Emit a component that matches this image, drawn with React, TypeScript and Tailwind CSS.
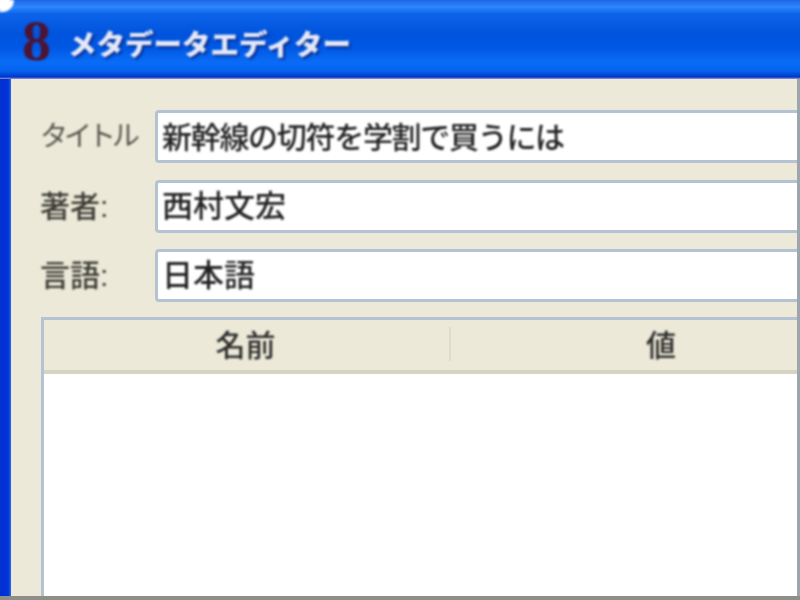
const font = "font-['Liberation_Sans','Noto_Sans_CJK_JP',sans-serif]";

function Field({ label, value, className, labelClass, valueClass }: { label: string; value: string; className: string; labelClass: string; valueClass: string }) {
  return (
    <div className={`flex items-center ${className}`}>
      <span className={`w-[115px] shrink-0 leading-none text-[#3c3c36] blur-[1px] whitespace-nowrap ${labelClass}`}>{label}</span>
      <div className="flex-1 h-[53px] flex items-center pl-[4px] bg-white border-y-[3px] border-l-[3px] border-[#b4c3d3] rounded-l-[4px] blur-[0.5px]">
        <span className={`leading-none text-[#222] font-medium blur-[0.8px] whitespace-nowrap ${valueClass}`}>{value}</span>
      </div>
    </div>
  );
}

export default function App() {
  return (
    <div className={`relative w-[800px] h-[600px] overflow-hidden flex flex-col bg-white ${font}`}>
      {/* window corner */}
      <div className="absolute top-0 left-0 w-[14px] h-[12px] bg-white rounded-br-[14px] blur-[1px]" />

      <div className="h-[79px] shrink-0 flex items-center pl-[22px] pt-[12px] rounded-tl-[14px] bg-[linear-gradient(to_bottom,#1c66e6_0px,#2f86fb_7px,#0c63ea_14px,#0053dc_34px,#0058e4_48px,#0a6cf6_62px,#0463ee_71px,#0036c8_77px,#9a9ad0_79px)]">
        <span className="w-[46px] -mt-[10px] text-[58px] leading-none font-bold text-[#4c1434] font-['Liberation_Serif',serif] blur-[1px]">8</span>
        <span className="text-[28.5px] leading-none font-black text-[#e4e9f8] blur-[0.9px] [text-shadow:2px_2px_2px_#0a2f90] whitespace-nowrap">メタデータエディター</span>
      </div>

      <div className="flex-1 min-h-0 flex">
        <div className="w-[11px] shrink-0 bg-[linear-gradient(to_right,#0030d0,#0034d8_75%,#2a6ae8)]" />
        <div className="flex-1 min-w-0 flex flex-col pt-[31px] pl-[29px] bg-[#ece9d8] border-r-[3px] border-[#9da6ad]">
          <Field label="タイトル" value="新幹線の切符を学割で買うには" className="" labelClass="text-[28px] tracking-[-4px] text-[#55554d]" valueClass="text-[30px] tracking-[-1.3px] pt-[2px]" />
          <Field label="著者:" value="西村文宏" className="mt-[17px]" labelClass="text-[30px] font-medium" valueClass="text-[31px]" />
          <Field label="言語:" value="日本語" className="mt-[16px]" labelClass="text-[30px] font-medium" valueClass="text-[31px]" />

          <div className="flex-1 min-h-0 mt-[15px] ml-[1px] flex flex-col border-t-[3px] border-l-[3px] border-[#b4c3d3]">
            <div className="h-[54px] shrink-0 flex border-b-[4px] border-[#d8d4c2] bg-[#ece9d8] text-[30px] leading-none text-[#2c2c2c] font-medium">
              <div className="w-[405px] flex items-center justify-center pr-[2px] pt-[2px]">
                <span className="blur-[0.8px]">名前</span>
              </div>
              <div className="w-[2px] h-[34px] mt-[7px] bg-[#dfdccb]" />
              <div className="flex-1 flex items-center pl-[195px] pt-[2px]">
                <span className="blur-[0.8px]">値</span>
              </div>
            </div>
            <div className="flex-1 bg-white" />
          </div>
        </div>
      </div>

      <div className="h-[4px] shrink-0 bg-[#8f8f8a] blur-[0.5px]" />
    </div>
  );
}
